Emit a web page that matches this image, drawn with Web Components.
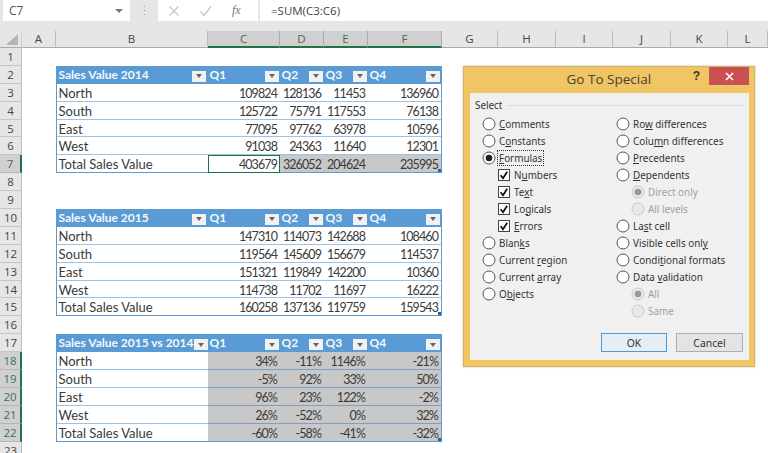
<!DOCTYPE html>
<html>
<head>
<meta charset="utf-8">
<title>Go To Special</title>
<style>
  html, body { margin: 0; height: 100%; overflow: hidden; background: #fff; }
  body { font-family: Lato, "Liberation Sans", sans-serif; color: #333; }
</style>
</head>
<body>
<excel-window>
  <formula-bar cell="C7" formula="=SUM(C3:C6)"></formula-bar>
  <work-sheet>
    <sales-table heading="Sales Value 2014" selected="total"
      rows="North,109824,128136,11453,136960;South,125722,75791,117553,76138;East,77095,97762,63978,10596;West,91038,24363,11640,12301;Total Sales Value,403679,326052,204624,235995"></sales-table>
    <sales-table heading="Sales Value 2015" style="margin-top:35.8px"
      rows="North,147310,114073,142688,108460;South,119564,145609,156679,114537;East,151321,119849,142200,10360;West,114738,11702,11697,16222;Total Sales Value,160258,137136,119759,159543"></sales-table>
    <sales-table heading="Sales Value 2015 vs 2014" selected="all" style="margin-top:17.9px"
      rows="North,34%,-11%,1146%,-21%;South,-5%,92%,33%,50%;East,96%,23%,122%,-2%;West,26%,-52%,0%,32%;Total Sales Value,-60%,-58%,-41%,-32%"></sales-table>
  </work-sheet>
  <go-to-special></go-to-special>
</excel-window>

<script>
// 外枠
class ExcelWindow extends HTMLElement {
  constructor() {
    super();
    this.attachShadow({ mode: 'open' }).innerHTML = `
      <style>
        :host { display: flex; flex-direction: column; position: relative; width: 768px; height: 453px; overflow: hidden; }
      </style>
      <slot></slot>`;
  }
}
customElements.define('excel-window', ExcelWindow);

// 数式バー
class FormulaBar extends HTMLElement {
  constructor() {
    super();
    const cell = this.getAttribute('cell');
    const formula = this.getAttribute('formula');
    this.attachShadow({ mode: 'open' }).innerHTML = `
      <style>
        :host { display: flex; height: 31px; box-sizing: border-box; padding: 0 0 10px 3px; background: #e6e6e6; font: 11.5px "Open Sans", sans-serif; color: #555; flex: none; }
        .box { background: #fff; height: 21px; display: flex; align-items: center; box-sizing: border-box; }
        #name { width: 127px; padding: 0 6px; justify-content: space-between; font-size: 12px; }
        #arrow { width: 0; height: 0; border: 4px solid transparent; border-top: 4px solid #777; border-bottom: 0; margin-right: 1px; }
        #grip { width: 28px; display: flex; justify-content: center; align-items: center; }
        #grip svg { display: block; }
        #buttons { width: 100px; padding-left: 9px; gap: 18px; }
        #buttons svg { display: block; flex: none; }
        #fx { font: italic 12px "Liberation Serif", serif; color: #777; margin-left: 1px; }
        #formula { flex: 1; margin-left: 2px; padding-left: 11px; font-size: 11.5px; color: #444; }
      </style>
      <div class="box" id="name"><span>${cell}</span><span id="arrow"></span></div>
      <div id="grip"><svg width="3" height="12"><path d="M1 1h1v1H1zM1 5h1v1H1zM1 9h1v1H1z" fill="#999"/></svg></div>
      <div class="box" id="buttons">
        <svg width="14" height="12" viewBox="0 0 14 12"><path d="M2.5 1.5l9 9M11.5 1.5l-9 9" stroke="#ccc" stroke-width="1.5" fill="none"/></svg>
        <svg width="14" height="12" viewBox="0 0 14 12"><path d="M1.5 6.5l3.5 4 7-9" stroke="#ccc" stroke-width="1.7" fill="none"/></svg>
        <span id="fx">fx</span>
      </div>
      <div class="box" id="formula">${formula}</div>`;
  }
}
customElements.define('formula-bar', FormulaBar);

// シート本体（行列見出し＋スロットに表）
class WorkSheet extends HTMLElement {
  constructor() {
    super();
    const cols = [['A', 34], ['B', 152], ['C', 72], ['D', 44], ['E', 44], ['F', 74], ['G', 56], ['H', 58], ['I', 57], ['J', 58], ['K', 57], ['L', 40]];
    const selCols = 'CDEF';
    const selRows = [7, 18, 19, 20, 21, 22];
    const colHtml = cols.map(([n, w]) =>
      `<div class="col ${selCols.includes(n) ? 'sel' : ''}" style="width:${w}px">${n}</div>`).join('');
    let rowHtml = '';
    for (let r = 1; r <= 23; r++) rowHtml += `<div class="row ${selRows.includes(r) ? 'sel' : ''}">${r}</div>`;
    this.attachShadow({ mode: 'open' }).innerHTML = `
      <style>
        :host { display: grid; grid-template-columns: 22px 1fr; grid-template-rows: 17px 1fr; flex: 1; min-height: 0; background: #fff; }
        #corner { background: #e6e6e6; border-bottom: 1px solid #aaa; border-right: 1px solid #ccc; box-sizing: border-box; display: flex; align-items: flex-end; justify-content: flex-end; padding: 0 3px 2px 0; }
        #colbar { display: flex; background: #e6e6e6; border-bottom: 1px solid #aaa; box-sizing: border-box; font: 11.5px "Open Sans", sans-serif; color: #444; }
        .col { flex: none; box-sizing: border-box; border-right: 1px solid #bdbdbd; text-align: center; line-height: 16px; }
        .col.sel { background: #d0d0d0; border-bottom: 2px solid #217346; margin-bottom: -1px; height: 17px; color: #3f6f5a; border-right-color: #aaa; }
        #rowbar { background: #e6e6e6; overflow: hidden; font: 11.5px "Open Sans", sans-serif; color: #444; }
        .row { height: 17.9px; box-sizing: border-box; border-bottom: 1px solid #c6c6c6; border-right: 1px solid #bdbdbd; text-align: center; line-height: 18px; }
        .row.sel { background: #d0d0d0; border-right: 2px solid #217346; color: #3f6f5a; border-bottom-color: #b5b5b5; }
        #body { padding: 17.9px 0 0 34px; display: flex; flex-direction: column; align-items: flex-start; }
      </style>
      <div id="corner"><svg width="12" height="11"><path d="M12 0v11H0z" fill="#b5b5b5"/></svg></div>
      <div id="colbar">${colHtml}</div>
      <div id="rowbar">${rowHtml}</div>
      <div id="body"><slot></slot></div>`;
  }
}
customElements.define('work-sheet', WorkSheet);

// 集計表
class SalesTable extends HTMLElement {
  constructor() {
    super();
    const heading = this.getAttribute('heading');
    const selected = this.getAttribute('selected');
    const rows = this.getAttribute('rows').split(';').map(r => r.split(','));
    const filter = '<span class="filter"><i></i></span>';
    let html = `<div class="head first"><span>${heading}</span>${filter}</div>`;
    ['Q1', 'Q2', 'Q3', 'Q4'].forEach(q => { html += `<div class="head"><span>${q}</span>${filter}</div>`; });
    rows.forEach((row, i) => {
      const last = i === rows.length - 1;
      row.forEach((v, c) => {
        let cls = c === 0 ? 'label' : 'num';
        if (c > 0 && selected === 'all') cls += ' grey';
        if (c > 0 && selected === 'total' && last) cls += c === 1 ? ' active' : ' grey';
        if (last) cls += ' last';
        html += `<div class="${cls}">${v}</div>`;
      });
    });
    this.attachShadow({ mode: 'open' }).innerHTML = `
      <style>
        :host { display: grid; position: relative; grid-template-columns: 151px 72px 44px 44px 73px; grid-auto-rows: 17.9px; width: 384px; border: solid #5b9bd5; border-width: 0 1px; font: 13px Lato, sans-serif; color: #3a3a3a; }
        .head { background: #5b9bd5; color: #f4f8fc; font-weight: 700; font-size: 12px; display: flex; justify-content: space-between; align-items: flex-end; padding: 0 1px 2px 1.5px; box-sizing: border-box; white-space: nowrap; min-width: 0; }
        .head span:first-child { line-height: 14px; }
        .head.first { padding-right: 2px; }
        .filter { flex: none; width: 14px; height: 11px; background: #f1f1f1; display: flex; align-items: center; justify-content: center; }
        .filter i { width: 0; height: 0; border: 3px solid transparent; border-top: 4px solid #666; border-bottom: 0; }
        .label, .num { border-bottom: 1px solid #9cc3e6; box-sizing: border-box; line-height: 19px; white-space: nowrap; overflow: hidden; }
        .label { padding-left: 1.5px; }
        .num { text-align: right; padding-right: 3px; font-size: 12.5px; letter-spacing: -.9px; }
        .grey { background: #c8c8c8; border-bottom-color: #7f9fc0; }
        .last { border-bottom-color: #5b9bd5; }
        .active { background: #fff; outline: 1px solid #217346; outline-offset: -1px; }
        #handle { position: absolute; right: 0; bottom: 1px; width: 3px; height: 3px; background: #2f5f9a; }
      </style>
      ${html}<div id="handle"></div>`;
  }
}
customElements.define('sales-table', SalesTable);

// ダイアログの選択肢
class DialogOption extends HTMLElement {
  constructor() {
    super();
    const type = this.getAttribute('type') || 'radio';
    const on = this.hasAttribute('checked');
    const off = this.hasAttribute('disabled');
    const stroke = off ? '#c9c9c9' : '#555';
    const mark = type === 'radio'
      ? `<svg width="14" height="14" viewBox="0 0 14 14"><circle cx="7" cy="7" r="6" fill="${off ? '#e8e8e8' : '#fff'}" stroke="${stroke}"/>${on ? `<circle cx="7" cy="7" r="3.3" fill="${off ? '#999' : '#222'}"/>` : ''}</svg>`
      : `<svg width="12" height="12" viewBox="0 0 12 12"><rect x=".5" y=".5" width="11" height="11" fill="#fff" stroke="#444"/>${on ? '<path d="M2.6 6.2l2.4 3 4.2-6.4" stroke="#111" stroke-width="1.8" fill="none"/>' : ''}</svg>`;
    this.attachShadow({ mode: 'open' }).innerHTML = `
      <style>
        :host { display: flex; height: 17px; align-items: center; color: ${off ? '#a0a0a0' : '#333'}; white-space: nowrap; }
        :host([indent]) { margin-left: var(--indent, 16px); }
        #mark { width: 14px; margin-right: 2px; display: flex; justify-content: center; }
        svg { display: block; }
        #label { padding: 0 1px; }
        :host([focused]) #label { outline: 1px dotted #333; outline-offset: 0; line-height: 14px; }
      </style>
      <span id="mark">${mark}</span><span id="label"><slot></slot></span>`;
  }
}
customElements.define('dialog-option', DialogOption);

// Go To Special ダイアログ
class GoToSpecial extends HTMLElement {
  constructor() {
    super();
    const o = (label, attrs = '') => `<dialog-option ${attrs}>${label}</dialog-option>`;
    const left = [
      o('<u>C</u>omments'), o('C<u>o</u>nstants'), o('<u>F</u>ormulas', 'checked focused'),
      o('N<u>u</u>mbers', 'type="check" checked indent'), o('Te<u>x</u>t', 'type="check" checked indent'),
      o('Lo<u>g</u>icals', 'type="check" checked indent'), o('<u>E</u>rrors', 'type="check" checked indent'),
      o('Blan<u>k</u>s'), o('Current <u>r</u>egion'), o('Current <u>a</u>rray'), o('O<u>b</u>jects')
    ].join('');
    const right = [
      o('Ro<u>w</u> differences'), o('Colu<u>m</u>n differences'), o('<u>P</u>recedents'), o('<u>D</u>ependents'),
      o('Direct only', 'checked disabled indent'), o('All levels', 'disabled indent'),
      o('La<u>s</u>t cell'), o('Visible cells onl<u>y</u>'), o('Condi<u>t</u>ional formats'), o('Data <u>v</u>alidation'),
      o('All', 'checked disabled indent'), o('Same', 'disabled indent')
    ].join('');
    this.attachShadow({ mode: 'open' }).innerHTML = `
      <style>
        :host { position: absolute; left: 463px; top: 66px; width: 292px; height: 301px; box-sizing: border-box; background: #f0c564; border: 1px solid #d8b560; box-shadow: 0 0 2px #bbb; padding: 0 5px 6px 6px; display: flex; flex-direction: column; font: 9.9px "Noto Sans", sans-serif; }
        #title { height: 26px; flex: none; display: flex; align-items: flex-start; }
        #title h1 { margin: 0; flex: 1; text-align: center; font: 400 13.5px/25px "Open Sans", sans-serif; color: #4a4030; padding-left: 55px; }
        #help { font: 700 12px/18px "Liberation Sans", sans-serif; color: #333; margin-right: 9px; }
        #close { width: 40px; height: 18px; background: #c85050; display: flex; align-items: center; justify-content: center; }
        #panel { flex: 1; background: #f0f0f0; display: flex; flex-direction: column; padding: 4px 5px 0 5px; }
        #legend { display: flex; align-items: center; gap: 5px; height: 16px; color: #333; }
        #legend i { flex: 1; height: 1px; background: #dcdcdc; }
        #cols { display: grid; grid-template-columns: 134px 1fr; padding: 2px 0 0 7px; }
        .col { --indent: 15px; }
        #buttons { display: flex; justify-content: flex-end; gap: 9px; margin-top: auto; padding: 0 1px 8px 0; }
        button { width: 67px; height: 19px; padding: 0; box-sizing: border-box; background: #e4e4e4; border: 1px solid #adadad; font: 10.4px "Noto Sans", sans-serif; color: #333; }
        button.def { width: 66px; background: #e6eef5; border: 1px solid #4a9bd8; }
      </style>
      <div id="title">
        <h1>Go To Special</h1>
        <span id="help">?</span>
        <span id="close"><svg width="9" height="9" viewBox="0 0 9 9"><path d="M1 1l7 7M8 1L1 8" stroke="#fff" stroke-width="1.6"/></svg></span>
      </div>
      <div id="panel">
        <div id="legend"><span>Select</span><i></i></div>
        <div id="cols"><div class="col">${left}</div><div class="col">${right}</div></div>
        <div id="buttons"><button class="def">OK</button><button>Cancel</button></div>
      </div>`;
  }
}
customElements.define('go-to-special', GoToSpecial);
</script>
</body>
</html>
